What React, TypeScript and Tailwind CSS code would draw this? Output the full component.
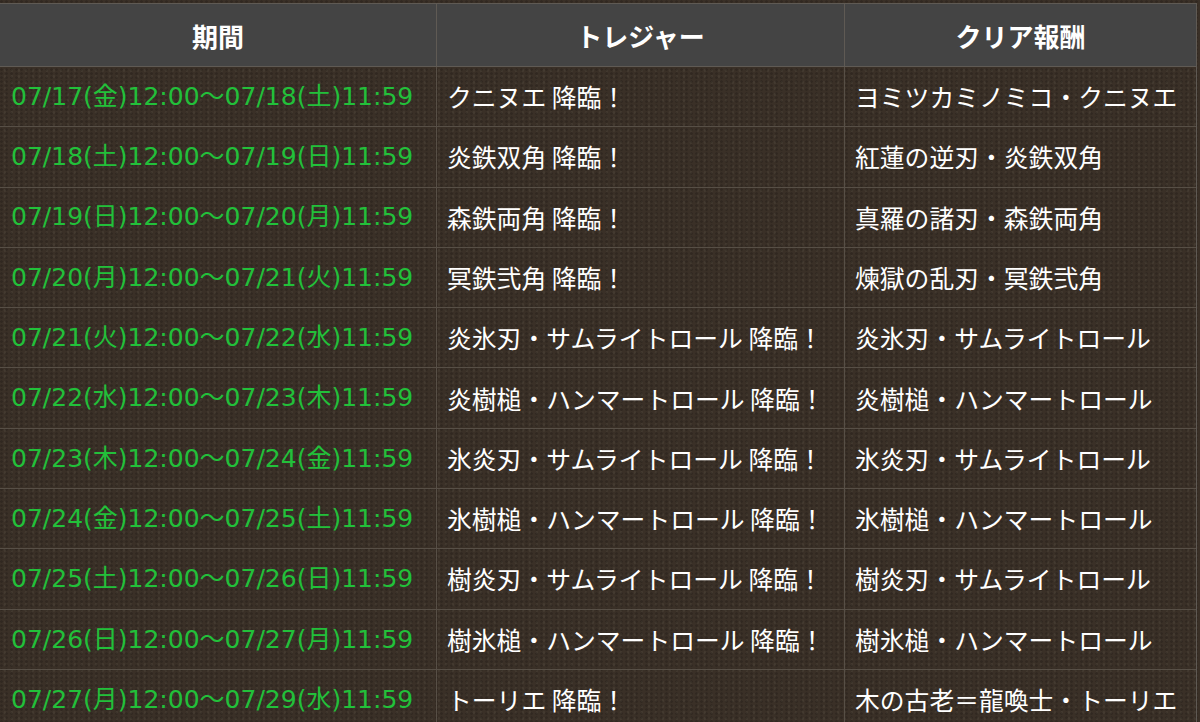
import React from 'react';

const rows = [
  { period: '07/17(金)12:00～07/18(土)11:59', treasure: 'クニヌエ 降臨！', reward: 'ヨミツカミノミコ・クニヌエ' },
  { period: '07/18(土)12:00～07/19(日)11:59', treasure: '炎鉄双角 降臨！', reward: '紅蓮の逆刃・炎鉄双角' },
  { period: '07/19(日)12:00～07/20(月)11:59', treasure: '森鉄両角 降臨！', reward: '真羅の諸刃・森鉄両角' },
  { period: '07/20(月)12:00～07/21(火)11:59', treasure: '冥鉄弐角 降臨！', reward: '煉獄の乱刃・冥鉄弐角' },
  { period: '07/21(火)12:00～07/22(水)11:59', treasure: '炎氷刃・サムライトロール 降臨！', reward: '炎氷刃・サムライトロール' },
  { period: '07/22(水)12:00～07/23(木)11:59', treasure: '炎樹槌・ハンマートロール 降臨！', reward: '炎樹槌・ハンマートロール' },
  { period: '07/23(木)12:00～07/24(金)11:59', treasure: '氷炎刃・サムライトロール 降臨！', reward: '氷炎刃・サムライトロール' },
  { period: '07/24(金)12:00～07/25(土)11:59', treasure: '氷樹槌・ハンマートロール 降臨！', reward: '氷樹槌・ハンマートロール' },
  { period: '07/25(土)12:00～07/26(日)11:59', treasure: '樹炎刃・サムライトロール 降臨！', reward: '樹炎刃・サムライトロール' },
  { period: '07/26(日)12:00～07/27(月)11:59', treasure: '樹氷槌・ハンマートロール 降臨！', reward: '樹氷槌・ハンマートロール' },
  { period: '07/27(月)12:00～07/29(水)11:59', treasure: 'トーリエ 降臨！', reward: '木の古老＝龍喚士・トーリエ' },
];

const font = { fontFamily: '"Noto Sans CJK JP", "Noto Sans", sans-serif' };
const dateFont = { fontFamily: '"DejaVu Sans", "Noto Sans CJK JP", sans-serif' };

export default function App() {
  return (
    <main
      className="w-[1200px] h-[722px] overflow-hidden bg-[#3a3027] bg-[radial-gradient(circle_at_30%_40%,rgba(0,0,0,0.16)_0_1px,transparent_1.6px),radial-gradient(circle_at_70%_75%,rgba(255,240,220,0.05)_0_1px,transparent_1.6px)] bg-[length:5px_4px,7px_6px] pt-[3px]"
      style={font}
    >
      <div className="w-[1197px] border-t border-r border-[#5f5a54]">
        <div className="grid grid-cols-[437px_408px_1fr] h-[63px] bg-[#444444] border-b border-[#5f5a54] text-white font-bold text-[26px]">
          <div className="flex items-center justify-center border-r border-[#5f5a54]">期間</div>
          <div className="flex items-center justify-center border-r border-[#5f5a54]">トレジャー</div>
          <div className="flex items-center justify-center">クリア報酬</div>
        </div>
        {rows.map((row) => (
          <div
            key={row.period}
            className="grid grid-cols-[437px_408px_1fr] h-[60.3px] border-b border-[#574f46] text-[24.8px]"
          >
            <div
              className="flex items-center pl-[11px] border-r border-[#574f46] text-[#22c03a] text-[25px] whitespace-nowrap"
              style={dateFont}
            >
              {row.period}
            </div>
            <div className="flex items-center pl-[10px] border-r border-[#574f46] text-white whitespace-nowrap">
              {row.treasure}
            </div>
            <div className="flex items-center pl-[10px] text-white whitespace-nowrap">
              {row.reward}
            </div>
          </div>
        ))}
      </div>
    </main>
  );
}
